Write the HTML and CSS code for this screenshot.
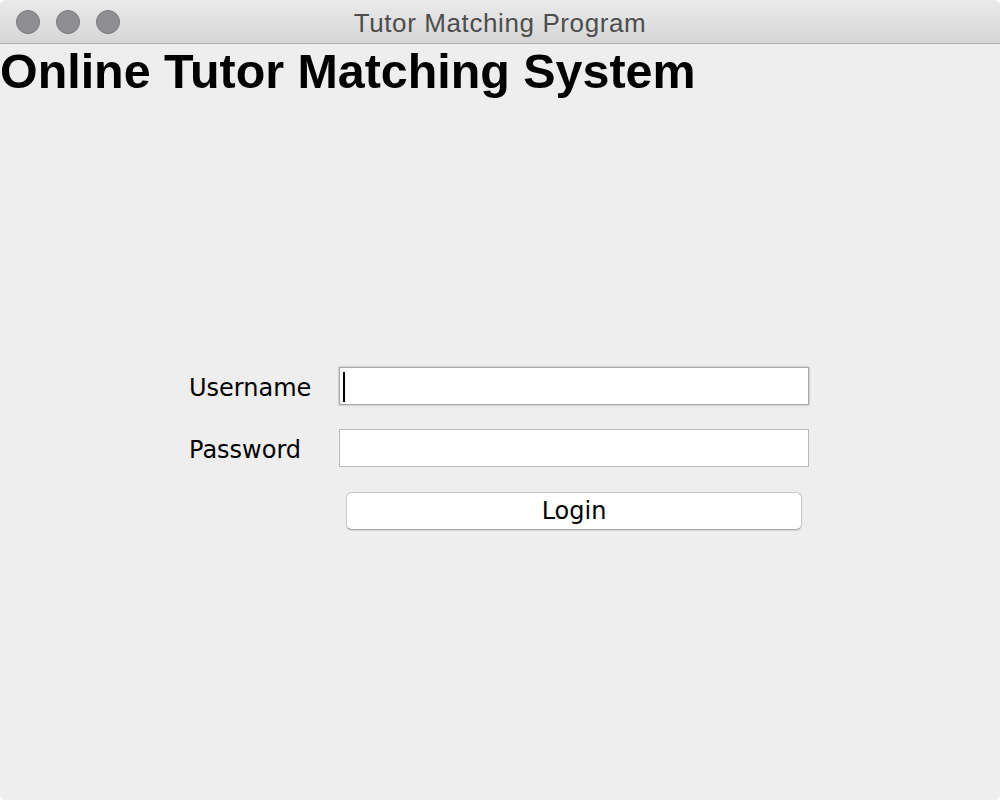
FILE: index.html
```html
<!DOCTYPE html>
<html>
<head>
<meta charset="utf-8">
<title>Tutor Matching Program</title>
<link rel="stylesheet" href="styles.css">
</head>
<body>
<div class="window">
  <div class="titlebar">
    <div class="lights">
      <span class="light"></span>
      <span class="light"></span>
      <span class="light"></span>
    </div>
    <div class="title">Tutor Matching Program</div>
  </div>
  <div class="content">
    <h1 class="heading">Online Tutor Matching System</h1>
    <form class="form">
      <label class="label" for="user">Username</label>
      <div class="field-wrap">
        <input class="field field-focus" id="user" type="text">
        <span class="caret"></span>
      </div>
      <label class="label" for="pass">Password</label>
      <div class="field-wrap">
        <input class="field" id="pass" type="password">
      </div>
      <button class="button" type="button">Login</button>
    </form>
  </div>
</div>
</body>
</html>
```
FILE: styles.css
```css
html, body {
  margin: 0;
  padding: 0;
  background: #ffffff;
}
.window {
  width: 1000px;
  height: 800px;
  background: #eeeeee;
  border-radius: 6px;
  overflow: hidden;
  display: flex;
  flex-direction: column;
}
.titlebar {
  height: 43px;
  flex: none;
  background: linear-gradient(#ebebeb, #d5d5d5);
  border-bottom: 1px solid #b1b1b1;
  position: relative;
  display: flex;
  align-items: center;
  justify-content: center;
}
.lights {
  position: absolute;
  left: 16px;
  top: 10px;
  display: flex;
  gap: 16px;
}
.light {
  width: 22px;
  height: 22px;
  border-radius: 50%;
  background: #8f8e93;
  border: 1px solid #77767b;
}
.title {
  font-family: "Liberation Sans", Arial, sans-serif;
  font-size: 26px;
  letter-spacing: 0.6px;
  color: #4d4d4d;
  line-height: 30px;
  margin-top: 2px;
}
.content {
  flex: 1;
  display: flex;
  flex-direction: column;
}
.heading {
  font-family: "Liberation Sans", Arial, sans-serif;
  font-weight: bold;
  font-size: 48.4px;
  line-height: 48px;
  margin: 3px 0 0 0;
  color: #000000;
}
.form {
  display: grid;
  grid-template-columns: 150px 470px;
  row-gap: 24px;
  margin: 272px 0 0 189px;
  align-items: center;
}
.label {
  font-family: "DejaVu Sans", Verdana, sans-serif;
  font-size: 24px;
  color: #000000;
  padding-top: 3px;
}
.field-wrap {
  position: relative;
  height: 38px;
}
.field {
  box-sizing: border-box;
  width: 470px;
  height: 38px;
  margin: 0;
  padding: 0 4px;
  border: 1px solid #b9b9b9;
  background: #ffffff;
  outline: none;
  font-family: "DejaVu Sans", sans-serif;
  font-size: 22px;
}
.field-focus {
  border-color: #a9a9a9;
  box-shadow: 0 0 2px rgba(0, 0, 0, 0.35);
}
.caret {
  position: absolute;
  left: 4px;
  top: 5px;
  width: 2px;
  height: 30px;
  background: #000000;
}
.button {
  grid-column: 2;
  margin: 1px 7px 0 7px;
  height: 38px;
  background: #ffffff;
  border: 1px solid #c6c6c6;
  border-bottom-color: #a9a9a9;
  border-radius: 6px;
  box-shadow: 0 1px 1px rgba(0, 0, 0, 0.12);
  font-family: "DejaVu Sans", Verdana, sans-serif;
  font-size: 24px;
  color: #000000;
  padding: 0;
}
```
